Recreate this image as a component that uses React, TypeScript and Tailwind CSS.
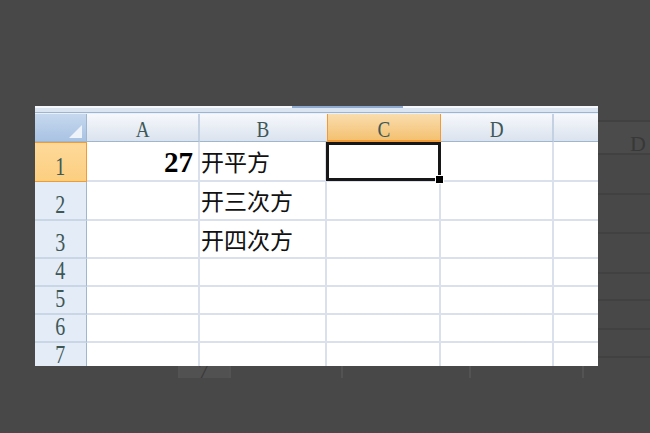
import React from "react";

const columns = ["A", "B", "C", "D", "E"];

interface RowData {
  label: string;
  height: string;
  a?: string;
  b?: string;
}

const rows: RowData[] = [
  { label: "1", height: "h-[40px]", a: "27", b: "开平方" },
  { label: "2", height: "h-[39px]", b: "开三次方" },
  { label: "3", height: "h-[38px]", b: "开四次方" },
  { label: "4", height: "h-[28px]" },
  { label: "5", height: "h-[28px]" },
  { label: "6", height: "h-[28px]" },
  { label: "7", height: "h-[28px]" },
];

const cjk = { fontFamily: '"Noto Sans CJK SC", "Noto Sans", sans-serif' };
const serif = { fontFamily: '"Liberation Serif", "DejaVu Serif", serif' };

function Ghost() {
  // faint copy of a larger sheet sitting behind the screenshot
  return (
    <div className="pointer-events-none absolute inset-0">
      <div className="absolute left-[598px] right-0 top-[120px] h-[33px] bg-[#4b4b4b]" />
      {[120, 153, 193, 232, 272, 299, 328, 356].map((y) => (
        <div key={y} className="absolute left-[598px] right-0 h-[2px] bg-[#414141]" style={{ top: y }} />
      ))}
      <div className="absolute left-[630px] top-[133px] text-[22px] leading-none text-[#383838]" style={serif}>
        D
      </div>
      <div className="absolute left-[178px] top-[366px] flex h-[12px] w-[51px] justify-center overflow-hidden bg-[#515151]">
        <span className="-mt-[6px] text-[22px] leading-none text-[#3a3a3a]" style={serif}>
          7
        </span>
      </div>
      {[178, 229, 341, 469, 582].map((x) => (
        <div key={x} className="absolute top-[366px] h-[12px] w-[2px] bg-[#535353]" style={{ left: x }} />
      ))}
    </div>
  );
}

function HeaderRow() {
  return (
    <div className="flex h-[28px] shrink-0">
      <div className="relative w-[52px] shrink-0 border-r border-b border-[#9eb6ce] bg-gradient-to-b from-[#c6d8ee] to-[#a9c3e3]">
        <svg className="absolute inset-0" width="52" height="28" viewBox="0 0 52 28">
          <polygon points="47,11 47,24 34,24" fill="#eef3f9" />
        </svg>
      </div>
      {columns.map((c) => (
        <div
          key={c}
          className={
            c === "C"
              ? "flex w-[114px] shrink-0 items-center justify-center border-x border-b-2 border-[#f29a34] bg-gradient-to-b from-[#f9ddad] to-[#f4c170] pt-[3px]"
              : c === "B"
                ? "flex w-[127px] shrink-0 items-center justify-center border-b border-b-[#9eb6ce] bg-gradient-to-b from-[#f6f8fc] to-[#dbe3ee] pt-[3px]"
                : "flex w-[113px] shrink-0 items-center justify-center border-r-2 border-b border-r-[#c3d1e2] border-b-[#9eb6ce] bg-gradient-to-b from-[#f6f8fc] to-[#dbe3ee] pt-[3px]"
          }
        >
          <span className="inline-block scale-x-[0.8] text-[24px] leading-none text-[#3e5858]" style={serif}>
            {c}
          </span>
        </div>
      ))}
    </div>
  );
}

function SheetRow({ row }: { row: RowData }) {
  const selected = row.label === "1";
  return (
    <div className={`flex shrink-0 ${row.height}`}>
      <div
        className={
          selected
            ? "flex w-[52px] shrink-0 items-end justify-center border border-l-0 border-[#f29a34] bg-gradient-to-b from-[#fed99a] to-[#fccf80] pb-[2px]"
            : "flex w-[52px] shrink-0 items-end justify-center border-r border-b-2 border-r-[#9eb6ce] border-b-[#c9d6e6] bg-[#e4ecf7] pb-[2px]"
        }
      >
        <span className="inline-block scale-x-[0.8] text-[25px] leading-none text-[#3e5858]" style={serif}>
          {row.label}
        </span>
      </div>
      <div className="flex w-[113px] shrink-0 items-center justify-end border-r-2 border-b-2 border-[#dae0ec] pr-[5px] pt-[2px]">
        {row.a && (
          <span className="text-[29px] font-bold leading-none text-black" style={serif}>
            {row.a}
          </span>
        )}
      </div>
      <div className="flex w-[127px] shrink-0 items-center border-r-2 border-b-2 border-[#dae0ec] pl-[1px]">
        {row.b && (
          <span className="text-[23px] leading-none text-[#111]" style={cjk}>
            {row.b}
          </span>
        )}
      </div>
      <div className="relative w-[114px] shrink-0 border-r-2 border-b-2 border-[#dae0ec]">
        {selected && (
          <div className="absolute -left-[1px] top-0 -right-[2px] -bottom-[1px] z-10 border-[3px] border-[#171717]">
            <div className="absolute -right-[6px] -bottom-[6px] h-[9px] w-[9px] border border-white bg-black" />
          </div>
        )}
      </div>
      <div className="w-[113px] shrink-0 border-r-2 border-b-2 border-[#dae0ec]" />
      <div className="w-[113px] shrink-0 border-r-2 border-b-2 border-[#dae0ec]" />
    </div>
  );
}

export default function App() {
  return (
    <div className="relative h-[433px] w-[650px] overflow-hidden bg-[#484848] pl-[35px] pt-[106px]">
      <Ghost />
      <div className="relative flex h-[260px] w-[563px] flex-col overflow-hidden bg-white">
        <div className="flex h-[2px] shrink-0">
          <div className="w-[257px] bg-[#f4f7fb]" />
          <div className="w-[111px] bg-[#8eaad0]" />
          <div className="flex-1 bg-[#f4f7fb]" />
        </div>
        <div className="h-[4px] shrink-0 bg-[#dbe5f1]" />
        <div className="h-[1px] shrink-0 bg-[#9db5d1]" />
        <div className="h-[1px] shrink-0 bg-[#eaf0f7]" />
        <HeaderRow />
        {rows.map((r) => (
          <SheetRow key={r.label} row={r} />
        ))}
      </div>
    </div>
  );
}
